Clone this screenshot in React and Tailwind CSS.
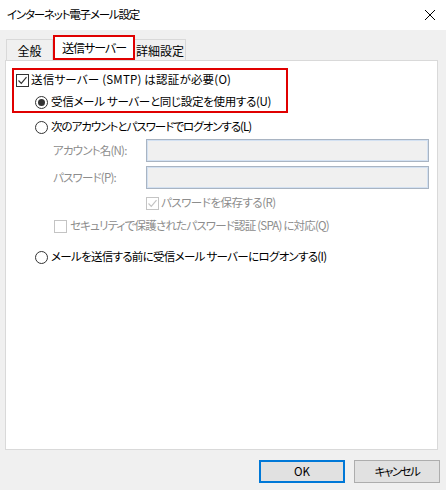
import React from 'react'

const font = {
  fontFamily: '"Noto Sans CJK JP", "Noto Sans", sans-serif',
  fontFeatureSettings: '"palt"',
}

const CheckBox = ({ checked, disabled }) => (
  <span
    className={`inline-flex items-center justify-center w-[13px] h-[13px] border bg-white shrink-0 ${
      disabled ? 'border-[#c4c4c4]' : 'border-[#333333]'
    }`}
  >
    {checked && (
      <svg width="11" height="11" viewBox="0 0 11 11">
        <path
          d="M1.5 5.5 L4.3 8.3 L9.5 2.2"
          fill="none"
          stroke={disabled ? '#c4c4c4' : '#333333'}
          strokeWidth="1.2"
        />
      </svg>
    )}
  </span>
)

const Radio = ({ checked }) => (
  <span className="inline-flex items-center justify-center w-[13px] h-[13px] rounded-full border border-[#333333] bg-white shrink-0">
    {checked && <span className="w-[7px] h-[7px] rounded-full bg-[#333333]" />}
  </span>
)

const inputBox =
  'w-[283px] h-[23px] bg-[#f0f0f0] border border-[#a9b4c2] shadow-[inset_0_0_0_1px_#d3e1f2]'

export default function App() {
  return (
    <div
      className="w-[446px] h-[490px] bg-[#f0f0f0] text-[11.5px] text-black flex flex-col whitespace-nowrap"
      style={font}
    >
      {/* Title bar */}
      <div className="h-[30px] bg-white flex items-center justify-between pl-[7px] pr-[8px]">
        <span className="leading-none tracking-[-1.2px]">インターネット電子メール設定</span>
        <svg width="12" height="12" viewBox="0 0 12 12" className="mr-[2px]">
          <path d="M1 1 L11 11 M11 1 L1 11" stroke="#000" strokeWidth="1" />
        </svg>
      </div>

      {/* Tabs */}
      <div className="flex items-end h-[30px] pl-[6px] pt-[5px] text-[12px]">
        <div className="w-[47px] h-[21px] border border-b-0 border-[#d9d9d9] flex items-center justify-center pt-[1px]">
          全般
        </div>
        <div className="w-[82px] h-[25px] border-2 border-[#e00000] bg-white flex items-center justify-center tracking-[-1px]">
          送信サーバー
        </div>
        <div className="w-[51px] h-[21px] border border-b-0 border-l-0 border-[#d9d9d9] flex items-center justify-center pt-[1px]">
          詳細設定
        </div>
      </div>

      {/* Panel */}
      <div className="mx-[5px] w-[433px] h-[390px] bg-white border border-[#d9d9d9]">
        <div className="ml-[6px] mt-[7px] w-[276px] h-[45px] border-2 border-[#e00000]">
          <div className="h-[19px] flex items-center pl-[2px] gap-[2px] pt-[1px]">
            <CheckBox checked />
            <span className="tracking-[0.2px]">送信サーバー (SMTP) は認証が必要(O)</span>
          </div>
          <div className="h-[22px] flex items-center pl-[21px] gap-[3px] pt-[4px]">
            <Radio checked />
            <span className="tracking-[-0.3px]">受信メール サーバーと同じ設定を使用する(U)</span>
          </div>
        </div>

        <div className="mt-[4px] h-[20px] flex items-center pl-[29px] gap-[3px]">
          <Radio />
          <span className="tracking-[-1px]">次のアカウントとパスワードでログオンする(L)</span>
        </div>

        <div className="mt-[2px] flex items-center text-[#8d8d8d]">
          <span className="w-[140px] pl-[47px] tracking-[-0.8px]">アカウント名(N):</span>
          <div className={inputBox} />
        </div>
        <div className="mt-[4px] flex items-center text-[#8d8d8d]">
          <span className="w-[140px] pl-[47px] tracking-[-0.8px]">パスワード(P):</span>
          <div className={inputBox} />
        </div>

        <div className="mt-[2px] h-[24px] flex items-center pl-[140px] gap-[2px] text-[#8d8d8d]">
          <CheckBox checked disabled />
          <span className="tracking-[-0.5px]">パスワードを保存する(R)</span>
        </div>
        <div className="h-[22px] flex items-center pl-[48px] gap-[3px] text-[#8d8d8d]">
          <CheckBox disabled />
          <span className="tracking-[-0.8px]">セキュリティで保護されたパスワード認証 (SPA) に対応(Q)</span>
        </div>

        <div className="mt-[10px] h-[20px] flex items-center pl-[29px] gap-[3px]">
          <Radio />
          <span className="tracking-[-0.7px]">メールを送信する前に受信メール サーバーにログオンする(I)</span>
        </div>
      </div>

      {/* Buttons */}
      <div className="flex justify-end gap-[9px] pr-[6px] mt-[10px]">
        <button className="w-[86px] h-[23px] bg-[#e1e1e1] border-2 border-[#0078d7] flex items-center justify-center">
          OK
        </button>
        <button className="w-[86px] h-[23px] bg-[#e1e1e1] border border-[#adadad] flex items-center justify-center tracking-[-1.5px]">
          キャンセル
        </button>
      </div>
    </div>
  )
}
